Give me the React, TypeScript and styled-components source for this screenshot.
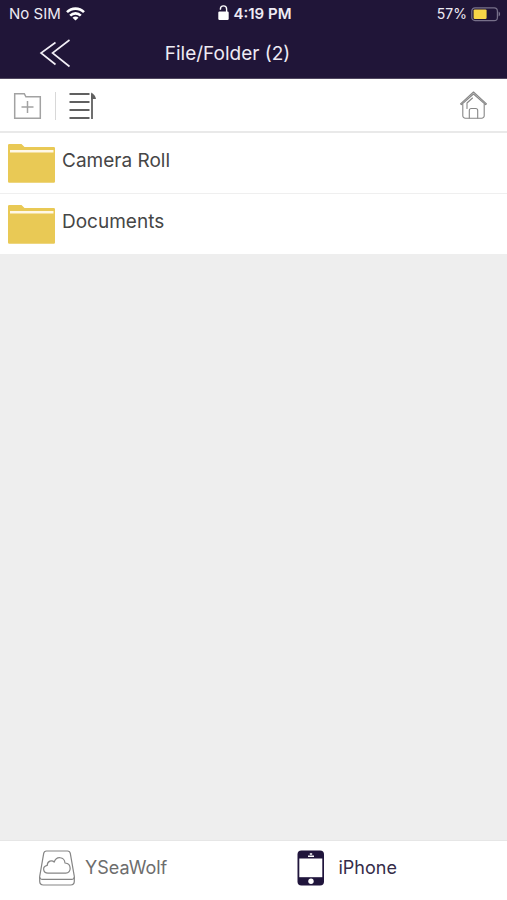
import React from "react";
import styled, { createGlobalStyle } from "styled-components";

const GlobalStyle = createGlobalStyle`
  *, *::before, *::after { box-sizing: border-box; }
  body {
    margin: 0;
    background: #eeeeee;
    font-family: Inter, "Liberation Sans", sans-serif;
  }
  svg { display: block; flex: none; }
`;

const Screen = styled.div`
  display: flex;
  flex-direction: column;
  min-height: 100vh;
`;

const TopArea = styled.header`
  background: #201538;
  color: #eeebf4;
  border-bottom: 1px solid #50475f;
`;

const StatusBar = styled.div`
  display: grid;
  grid-template-columns: 1fr auto 1fr;
  align-items: center;
  height: 28px;
  padding: 0 6px 0 9px;
`;

const StatusGroup = styled.div<{ $end?: boolean; $strong?: boolean }>`
  display: flex;
  align-items: center;
  justify-content: ${(p) => (p.$end ? "flex-end" : "flex-start")};
  gap: 4px;
  font-size: ${(p) => (p.$end ? 14 : 15)}px;
  line-height: 20px;
  font-weight: ${(p) => (p.$strong ? 600 : 400)};
`;

const TitleBar = styled.div`
  display: grid;
  grid-template-columns: 54px 1fr 54px;
  align-items: center;
  height: 50px;
  padding: 2px 80px 0 28px;
`;

const IconButton = styled.button`
  display: flex;
  align-items: center;
  justify-content: center;
  padding: 0;
  border: 0;
  background: none;
  color: inherit;
  cursor: pointer;
`;

const Title = styled.h1`
  margin: 0;
  font-size: 19px;
  line-height: 24px;
  font-weight: 400;
  text-align: center;
  white-space: nowrap;
`;

const Toolbar = styled.div`
  display: flex;
  align-items: center;
  height: 54px;
  padding: 1px 19px 0 13px;
  gap: 13px;
  background: #ffffff;
  border-bottom: 2px solid #e9e9e9;
`;

const Divider = styled.span`
  width: 1px;
  height: 28px;
  background: #d8d8d8;
`;

const Spacer = styled.span`
  flex: 1;
`;

const FileList = styled.ul`
  flex: 1;
  margin: 0;
  padding: 0;
  list-style: none;
`;

const FileItem = styled.li`
  background: #ffffff;
  & + & { border-top: 1px solid #efefef; }
`;

const FileButton = styled.button`
  display: flex;
  align-items: center;
  gap: 7px;
  width: 100%;
  height: 60px;
  padding: 0 8px;
  border: 0;
  background: none;
  text-align: left;
  cursor: pointer;
`;

const FileName = styled.span`
  padding-bottom: 4px;
  font: 400 19px/24px Inter, "Liberation Sans", sans-serif;
  color: #464646;
`;

const TabBar = styled.nav`
  display: grid;
  grid-template-columns: 1fr 1fr;
  height: 60px;
  background: #ffffff;
  border-top: 1px solid #e6e6e6;
`;

const Tab = styled.button<{ $active?: boolean }>`
  display: flex;
  align-items: center;
  gap: 10px;
  padding: 0 0 6px 39px;
  border: 0;
  background: none;
  font: 400 18px/24px Inter, "Liberation Sans", sans-serif;
  color: ${(p) => (p.$active ? "#352c49" : "#6d6d6d")};
  cursor: pointer;
`;

const WifiIcon = () => (
  <svg width="20" height="14" viewBox="-1 0 20 14" fill="none" stroke="#fff" strokeWidth="2.6" aria-hidden="true">
    <path d="M1 5.2C5.8.4 13.2.4 18 5.2" />
    <path d="M4.2 8.6c3-3 7.6-3 10.6 0" />
    <path d="M9.5 13.6 6.5 10.7c1.7-1.6 4.3-1.6 6 0Z" fill="#fff" stroke="none" />
  </svg>
);

const LockIcon = () => (
  <svg width="11" height="18" viewBox="0 0 11 18" fill="none" aria-hidden="true">
    <rect x="0.3" y="6.5" width="10.4" height="8.5" rx="1.2" fill="#fff" />
    <path d="M2.4 4.8V4a3.1 3.1 0 0 1 6.2 0v4" stroke="#fff" strokeWidth="1.4" />
  </svg>
);

const BatteryIcon = () => (
  <svg width="30" height="15" viewBox="0 0 30 15" fill="none" aria-hidden="true">
    <rect x="0.8" y="0.8" width="25.6" height="12.8" rx="3.2" stroke="#77708a" strokeWidth="1.2" />
    <rect x="2.6" y="2.4" width="13" height="9.6" rx="1.2" fill="#f7d547" />
    <path d="M27.6 4.6v5c2-.8 2-4.2 0-5Z" fill="#77708a" />
  </svg>
);

const BackIcon = () => (
  <svg width="32" height="30" viewBox="0 0 32 30" fill="none" stroke="#f2eff7" strokeWidth="1.6" aria-hidden="true">
    <path d="M16.5 3.5 2 14l14.5 11.5M30.5 1 13.5 14l17 13.5" />
  </svg>
);

const NewFolderIcon = () => (
  <svg width="29" height="28" viewBox="0 0 29 28" fill="none" stroke="#a2a2a2" strokeWidth="1.5" aria-hidden="true">
    <path d="M1.7 1.7h9.6l1.6 3.1h14.4v21.5H1.7Z" />
    <path d="M14.5 9v12M8.5 15h12" />
  </svg>
);

const SortIcon = () => (
  <svg width="29" height="28" viewBox="0 0 29 28" fill="none" stroke="#606060" strokeWidth="1.8" aria-hidden="true">
    <path d="M.5 2h20M.5 10h20M.5 18h20M.5 26h20M23 27V2" />
    <path d="M22.1.5v6.5H27Q26.3 2.7 22.1.5Z" fill="#606060" stroke="none" />
  </svg>
);

const HomeIcon = () => (
  <svg width="29" height="29" viewBox="0 0 29 29" fill="none" stroke="#878787" strokeWidth="1.1" strokeLinejoin="round" strokeLinecap="round" aria-hidden="true">
    <path d="M1.5 12.8 14.5 1l13 11.8-1 .9L14.5 3 2.5 13.7Z" />
    <path d="M3.8 13.3v11.4a2.5 2.5 0 0 0 2.5 2.5h16.4a2.5 2.5 0 0 0 2.5-2.5V13.3" />
    <path d="M10.3 27v-7.5a2 2 0 0 1 2-2h4.4a2 2 0 0 1 2 2V27M8 17.5V12l5.5-5" />
  </svg>
);

const FolderIcon = () => (
  <svg width="47" height="40" viewBox="0 0 47 40" aria-hidden="true">
    <path d="M0 2.2Q0 1 1.2 1H13.5L16.5 4H45.8Q47 4 47 5.2V38.6Q47 39.8 45.8 39.8H1.2Q0 39.8 0 38.6Z" fill="#e9c955" />
    <path d="M2 7h43.5v2.4H2Z" fill="#fff8e6" />
  </svg>
);

const DriveIcon = () => (
  <svg width="36" height="36" viewBox="0 0 36 36" fill="none" stroke="#858585" strokeWidth="1.2" strokeLinejoin="round" aria-hidden="true">
    <path d="M7.5 1h21q2.4 0 2.8 2.4l4 23q.3 3-3 3H3.7q-3.3 0-3-3l4-23Q5.1 1 7.5 1Z" />
    <path d="M.7 27v4.3q0 3.7 3.7 3.7h27.2q3.7 0 3.7-3.7V27" />
    <path d="M9 23.2c-5.2 0-6.1-6.8-.8-7.8.1-4.4 4.6-5.8 7-3.4C17.3 5.9 25.4 6.4 26 13c6.8.4 6.7 10.2.8 10.2Z" />
  </svg>
);

const PhoneIcon = () => (
  <svg width="36" height="36" viewBox="0 0 36 36" aria-hidden="true">
    <rect x="4.5" y="0.5" width="26.5" height="35" rx="4" fill="#20153c" />
    <path d="M6.3 8.5h23v18.7h-23Z" fill="#fff" />
    <path d="M15 5.5h6v1.4h-6ZM16.8 3.2h2.4v1.6h-2.4Z" fill="#fff" />
    <circle cx="18" cy="31.2" r="2.7" fill="#fff" />
  </svg>
);

const folders = ["Camera Roll", "Documents"];

export default function App() {
  return (
    <Screen>
      <GlobalStyle />
      <TopArea>
        <StatusBar>
          <StatusGroup>
            No SIM
            <WifiIcon />
          </StatusGroup>
          <StatusGroup $strong>
            <LockIcon />
            4:19 PM
          </StatusGroup>
          <StatusGroup $end>
            57%
            <BatteryIcon />
          </StatusGroup>
        </StatusBar>
        <TitleBar>
          <IconButton type="button" aria-label="Back">
            <BackIcon />
          </IconButton>
          <Title>File/Folder (2)</Title>
        </TitleBar>
      </TopArea>
      <Toolbar>
        <IconButton type="button" aria-label="New folder">
          <NewFolderIcon />
        </IconButton>
        <Divider />
        <IconButton type="button" aria-label="Sort">
          <SortIcon />
        </IconButton>
        <Spacer />
        <IconButton type="button" aria-label="Home">
          <HomeIcon />
        </IconButton>
      </Toolbar>
      <FileList>
        {folders.map((name) => (
          <FileItem key={name}>
            <FileButton type="button">
              <FolderIcon />
              <FileName>{name}</FileName>
            </FileButton>
          </FileItem>
        ))}
      </FileList>
      <TabBar>
        <Tab type="button">
          <DriveIcon />
          YSeaWolf
        </Tab>
        <Tab type="button" $active aria-current="page">
          <PhoneIcon />
          iPhone
        </Tab>
      </TabBar>
    </Screen>
  );
}
